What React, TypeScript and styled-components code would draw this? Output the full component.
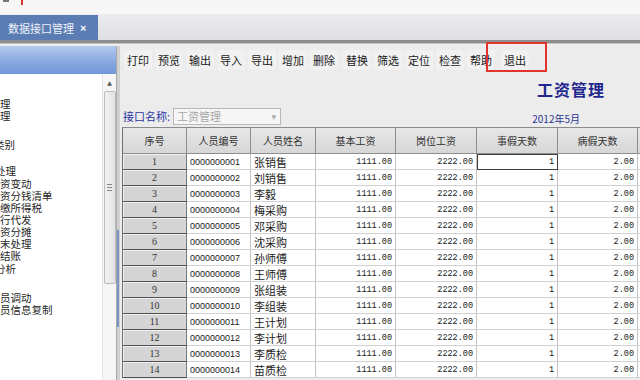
import React from 'react';
import styled, { createGlobalStyle } from 'styled-components';

const GlobalStyle = createGlobalStyle`
  html, body { margin: 0; padding: 0; background: #f0f0f0; }
  body { font-family: "Noto Sans CJK SC", "Liberation Sans", sans-serif; }
  #root { width: 640px; height: 380px; }
`;

const Window = styled.div`
  width: 640px;
  height: 380px;
  overflow: hidden;
  display: flex;
  flex-direction: column;
  background: #f0f0f0;
`;

const TopStrip = styled.div`
  height: 14px;
  flex: none;
  background: #f7f7f7;
  display: flex;
  align-items: flex-start;
  gap: 12px;
  padding-left: 3px;
`;

const Mark = styled.span<{ $color: string; $w: number; $h: number }>`
  display: block;
  width: ${(p) => p.$w}px;
  height: ${(p) => p.$h}px;
  background: ${(p) => p.$color};
`;

const TabBar = styled.div`
  height: 26px;
  flex: none;
  background: linear-gradient(#ececee, #dedfe2);
  display: flex;
  align-items: flex-end;
`;

const Tab = styled.div`
  width: 98px;
  height: 25px;
  box-sizing: border-box;
  background: #5b7db4;
  color: #eef2fa;
  font-size: 11px;
  display: flex;
  align-items: center;
  padding-left: 8px;
  gap: 6px;
`;

const TabClose = styled.span`
  font-family: "Liberation Sans", sans-serif;
  font-size: 11px;
  font-weight: bold;
  color: #f4f6fb;
`;

const Divider = styled.div`
  height: 3px;
  flex: none;
  background: #8d8d8d;
  border-bottom: 1px solid #c4c4c4;
`;

const Body = styled.div`
  flex: 1;
  min-height: 0;
  display: flex;
  padding-top: 2px;
  background: #efefef;
`;

const LeftPanel = styled.div`
  width: 116px;
  flex: none;
  display: flex;
  flex-direction: column;
  background: #ffffff;
`;

const PanelHeader = styled.div`
  height: 28px;
  flex: none;
  background: linear-gradient(#b4cbef, #89a9e0 55%, #7097d8);
`;

const PanelBody = styled.div`
  flex: 1;
  min-height: 0;
  display: flex;
`;

const List = styled.div`
  flex: 1;
  overflow: hidden;
  display: flex;
  flex-direction: column;
`;

const ListItem = styled.div<{ $top: number; $shift: number }>`
  height: 12px;
  line-height: 12px;
  flex: none;
  margin-top: ${(p) => p.$top}px;
  margin-left: ${(p) => p.$shift}px;
  font-size: 10.5px;
  color: #262626;
  white-space: nowrap;
`;

const ScrollTrack = styled.div`
  width: 13px;
  flex: none;
  background: #f6f6f6;
  border-left: 1px solid #e6e6e6;
  display: flex;
  flex-direction: column;
  align-items: center;
  padding-top: 2px;
`;

const ScrollArrow = styled.div`
  width: 12px;
  height: 13px;
  display: flex;
  align-items: center;
  justify-content: center;
  font-size: 6px;
  color: #555;
  font-family: "DejaVu Sans", sans-serif;
`;

const ScrollThumb = styled.div`
  width: 12px;
  height: 193px;
  box-sizing: border-box;
  margin-top: 2px;
  border: 1px solid #bcbcbc;
  border-radius: 2px;
  background: linear-gradient(90deg, #f2f2f2, #e2e2e2);
  display: flex;
  align-items: center;
  justify-content: center;
`;

const Grip = styled.div`
  width: 5px;
  height: 5px;
  border-top: 1px solid #888;
  border-bottom: 1px solid #888;
  position: relative;
  &::after {
    content: '';
    position: absolute;
    left: 0;
    right: 0;
    top: 2px;
    border-top: 1px solid #888;
  }
`;

const Splitter = styled.div`
  width: 4px;
  flex: none;
  background: #d0d0d0;
  border-left: 1px solid #a8a8a8;
  box-sizing: border-box;
  display: flex;
  flex-direction: column;
`;

const SplitterMark = styled.div`
  margin-top: 184px;
  width: 2px;
  height: 97px;
  background: #7c93c6;
`;

const Main = styled.div`
  flex: 1;
  min-width: 0;
  display: flex;
  flex-direction: column;
  background: #ececec;
  padding-left: 2px;
`;

const Toolbar = styled.div`
  height: 24px;
  flex: none;
  display: flex;
  align-items: flex-end;
  gap: 3px;
  padding-left: 2px;
`;

const ToolButton = styled.div<{ $extra?: number }>`
  position: relative;
  height: 20px;
  line-height: 20px;
  padding: 0 3px;
  margin-left: ${(p) => p.$extra ?? 0}px;
  font-size: 11px;
  color: #1a1a1a;
  background: #f1f1f1;
  border-radius: 2px;
`;

const Highlight = styled.span`
  position: absolute;
  left: -15px;
  right: -18px;
  top: -8px;
  bottom: -2px;
  border: 2px solid #e2332f;
  pointer-events: none;
`;

const TitleRow = styled.div`
  flex: none;
  margin-top: 9px;
  height: 20px;
  display: flex;
  justify-content: flex-end;
  padding-right: 35px;
`;

const Title = styled.div`
  font-size: 16px;
  line-height: 20px;
  font-weight: bold;
  color: #22268e;
  letter-spacing: 1px;
`;

const FilterRow = styled.div`
  flex: none;
  margin-top: 7px;
  height: 20px;
  display: flex;
  align-items: center;
`;

const Label = styled.span`
  font-size: 11px;
  color: #2b37a6;
  margin-left: 1px;
`;

const Combo = styled.div`
  margin-left: 3px;
  width: 108px;
  height: 17px;
  box-sizing: border-box;
  border: 1px solid #b8b8b8;
  background: #f6f6f6;
  display: flex;
  align-items: center;
  justify-content: space-between;
  padding: 0 4px 0 3px;
  font-size: 11px;
  color: #a6a6a6;
`;

const ComboArrow = styled.span`
  font-size: 6px;
  color: #aaa;
  font-family: "DejaVu Sans", sans-serif;
`;

const DateText = styled.span`
  margin-left: auto;
  margin-right: 60px;
  font-size: 10px;
  color: #2a3490;
  margin-top: 4px;
`;

const TableFrame = styled.div`
  flex: none;
  margin-top: 1px;
  overflow: hidden;
`;

const Grid = styled.div`
  display: grid;
  grid-template-columns: 64px 64px 65px 80px 81px 81px 80px 60px;
  grid-template-rows: 26px;
  grid-auto-rows: 16px;
  width: max-content;
  border-left: 1px solid #6e6e6e;
  border-top: 1px solid #8a8a8a;
`;

const HeadCell = styled.div`
  box-sizing: border-box;
  background: linear-gradient(#e7e7e7, #d7d7d7);
  border-right: 1px solid #8e8e8e;
  border-bottom: 1px solid #8e8e8e;
  display: flex;
  align-items: center;
  justify-content: center;
  font-size: 10px;
  color: #333;
`;

const RowNum = styled.div`
  box-sizing: border-box;
  background: #d5d5d5;
  box-shadow: inset 1px 1px 0 #f2f2f2;
  border-right: 1px solid #777;
  border-bottom: 1px solid #4e4e4e;
  display: flex;
  align-items: center;
  justify-content: center;
  font-family: "Liberation Serif", serif;
  font-size: 10px;
  color: #333;
`;

const Cell = styled.div<{ $align: 'left' | 'right'; $kind: 'id' | 'name' | 'num'; $focused?: boolean }>`
  box-sizing: border-box;
  background: #fff;
  border-right: 1px solid #c4c4c4;
  border-bottom: 1px solid #d2d2d2;
  display: flex;
  align-items: center;
  justify-content: ${(p) => (p.$align === 'left' ? 'flex-start' : 'flex-end')};
  padding: ${(p) => (p.$align === 'left' ? '0 0 0 3px' : '0 3px 0 0')};
  white-space: nowrap;
  overflow: hidden;
  color: #222;
  font-family: ${(p) =>
    p.$kind === 'num'
      ? '"Liberation Mono", monospace'
      : p.$kind === 'id'
      ? '"Liberation Sans", sans-serif'
      : '"Noto Sans CJK SC", sans-serif'};
  font-size: ${(p) => (p.$kind === 'num' ? '8.5px' : p.$kind === 'id' ? '9px' : '11px')};
  outline: ${(p) => (p.$focused ? '1px solid #3c3c3c' : 'none')};
  outline-offset: -1px;
`;

const columns = ['序号', '人员编号', '人员姓名', '基本工资', '岗位工资', '事假天数', '病假天数', ''];

const names = ['张销售', '刘销售', '李毅', '梅采购', '邓采购', '沈采购', '孙师傅', '王师傅', '张组装', '李组装', '王计划', '李计划', '李质检', '苗质检'];

const tools: { label: string; extra?: number; marked?: boolean }[] = [
  { label: '打印' },
  { label: '预览' },
  { label: '输出' },
  { label: '导入' },
  { label: '导出' },
  { label: '增加' },
  { label: '删除' },
  { label: '替换', extra: 2 },
  { label: '筛选' },
  { label: '定位' },
  { label: '检查' },
  { label: '帮助' },
  { label: '退出', extra: 3, marked: true },
];

const listItems: { text: string; top: number; shift: number }[] = [
  { text: '理', top: 24, shift: 0 },
  { text: '理', top: 0, shift: 0 },
  { text: '类别', top: 17, shift: -6 },
  { text: '处理', top: 14, shift: -5 },
  { text: '资变动', top: 1, shift: 0 },
  { text: '资分钱清单', top: 0, shift: 0 },
  { text: '缴所得税', top: 0, shift: 0 },
  { text: '行代发', top: 0, shift: 0 },
  { text: '资分摊', top: 0, shift: 0 },
  { text: '末处理', top: 0, shift: 0 },
  { text: '结账', top: 0, shift: 0 },
  { text: '分析', top: 1, shift: -5 },
  { text: '员调动', top: 17, shift: 0 },
  { text: '员信息复制', top: 0, shift: 0 },
];

export default function App() {
  return (
    <>
      <GlobalStyle />
      <Window>
        <TopStrip>
          <Mark $color="#777" $w={6} $h={2} />
          <Mark $color="#d9342b" $w={2} $h={5} />
        </TopStrip>
        <TabBar>
          <Tab>
            数据接口管理
            <TabClose>×</TabClose>
          </Tab>
        </TabBar>
        <Divider />
        <Body>
          <LeftPanel>
            <PanelHeader />
            <PanelBody>
              <List>
                {listItems.map((it, i) => (
                  <ListItem key={i} $top={it.top} $shift={it.shift}>
                    {it.text}
                  </ListItem>
                ))}
              </List>
              <ScrollTrack>
                <ScrollArrow>▲</ScrollArrow>
                <ScrollThumb>
                  <Grip />
                </ScrollThumb>
              </ScrollTrack>
            </PanelBody>
          </LeftPanel>
          <Splitter>
            <SplitterMark />
          </Splitter>
          <Main>
            <Toolbar>
              {tools.map((t) => (
                <ToolButton key={t.label} $extra={t.extra}>
                  {t.label}
                  {t.marked && <Highlight />}
                </ToolButton>
              ))}
            </Toolbar>
            <TitleRow>
              <Title>工资管理</Title>
            </TitleRow>
            <FilterRow>
              <Label>接口名称:</Label>
              <Combo>
                工资管理
                <ComboArrow>▼</ComboArrow>
              </Combo>
              <DateText>2012年5月</DateText>
            </FilterRow>
            <TableFrame>
              <Grid>
                {columns.map((c, i) => (
                  <HeadCell key={i}>{c}</HeadCell>
                ))}
                {names.map((n, i) => {
                  const num = i + 1;
                  return (
                    <React.Fragment key={num}>
                      <RowNum>{num}</RowNum>
                      <Cell $align="left" $kind="id">{String(num).padStart(10, '0')}</Cell>
                      <Cell $align="left" $kind="name">{n}</Cell>
                      <Cell $align="right" $kind="num">1111.00</Cell>
                      <Cell $align="right" $kind="num">2222.00</Cell>
                      <Cell $align="right" $kind="num" $focused={i === 0}>1</Cell>
                      <Cell $align="right" $kind="num">2.00</Cell>
                      <Cell $align="right" $kind="num">1.00</Cell>
                    </React.Fragment>
                  );
                })}
              </Grid>
            </TableFrame>
          </Main>
        </Body>
      </Window>
    </>
  );
}
